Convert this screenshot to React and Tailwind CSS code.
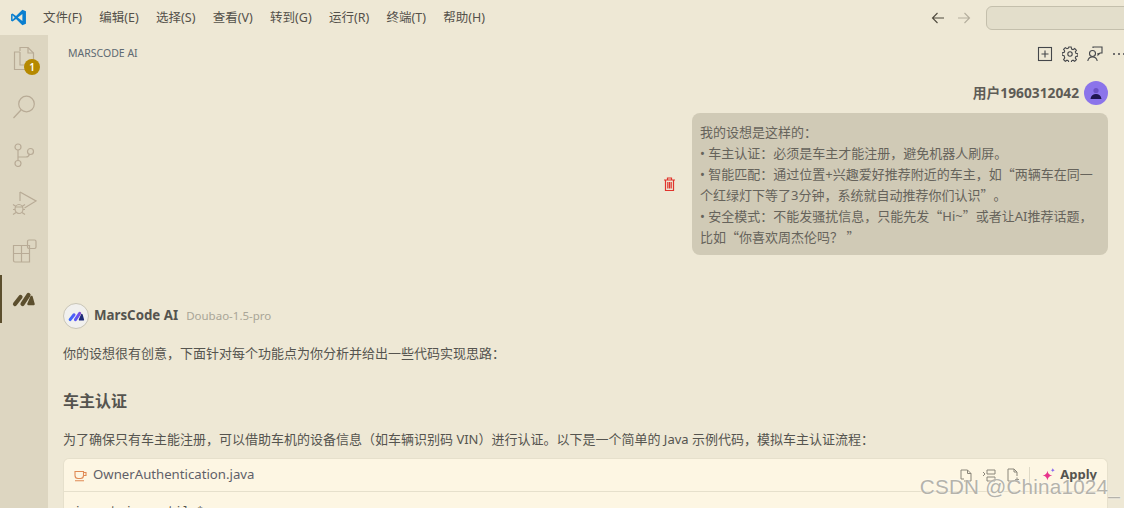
import React from 'react';

const sans = 'font-["Noto_Sans","Noto_Sans_CJK_SC",sans-serif]';

const menus = ['文件(F)', '编辑(E)', '选择(S)', '查看(V)', '转到(G)', '运行(R)', '终端(T)', '帮助(H)'];

function VsLogo() {
  return (
    <svg width="17" height="17" viewBox="0 0 24 24">
      <path d="M17.5 1 8.5 10 3.6 6.2 1.5 7.3v9.4l2.1 1.1 4.9-3.8 9 9 5-2.2V3.2z" fill="#0a7fd0" />
      <path d="M17.5 7 11 12l6.5 5z" fill="#eee8d5" />
      <path d="M3.6 8.9v6.2L6.6 12z" fill="#eee8d5" />
    </svg>
  );
}

// quotes sit in a full em box, as the CJK face draws them in the reference
function Open() {
  return <span className="inline-block w-[13px] text-right font-['Noto_Sans_CJK_SC',sans-serif] leading-none">“</span>;
}

function Close() {
  return <span className="inline-block w-[13px] text-left font-['Noto_Sans_CJK_SC',sans-serif] leading-none">”</span>;
}

function ActivityBar() {
  const stroke = { fill: 'none', stroke: '#b8ab96', strokeWidth: 1.2 };
  return (
    <aside className="flex w-12 shrink-0 flex-col items-center bg-[#ddd6c1]">
      <div className="relative flex h-12 w-12 items-center justify-center">
        <svg width="24" height="26" viewBox="0 0 24 26" {...stroke}>
          <path d="M8 5V1.500h8l5.500 5.500v13H17" />
          <path d="M16 1.500V7h5.500" />
          <path d="M8 6H2.500v17.500H15a2 2 0 0 0 2-2V19" />
          <path d="M8 6v13h9" />
        </svg>
        <span className={`absolute left-6 top-[24px] flex h-4 w-4 items-center justify-center rounded-full bg-[#b58900] text-[10px] font-semibold leading-none text-white ${sans}`}>1</span>
      </div>
      <div className="flex h-12 w-12 items-center justify-center">
        <svg width="24" height="24" viewBox="0 0 24 24" {...stroke}>
          <circle cx="14.500" cy="9" r="7.800" />
          <path d="M9 15 1.500 23" />
        </svg>
      </div>
      <div className="flex h-12 w-12 items-center justify-center">
        <svg width="24" height="24" viewBox="0 0 24 24" {...stroke}>
          <circle cx="6" cy="4" r="3" />
          <circle cx="6" cy="20.500" r="3" />
          <circle cx="18.500" cy="8.500" r="3" />
          <path d="M6 7v10.500M6 14h8c2 0 3-1 3.500-3" />
        </svg>
      </div>
      <div className="flex h-12 w-12 items-center justify-center">
        <svg width="25" height="25" viewBox="0 0 25 25" {...stroke}>
          <path d="M8 1 24 10 12.500 17" />
          <path d="M8 1v9" />
          <ellipse cx="7" cy="18" rx="4" ry="4.500" />
          <path d="M1 13.500l3 2M13 13.500l-3 2M1 18.500h2M11 18.500h2M1 23.500l3-2M13 23.500l-3-2M3 16h8" />
        </svg>
      </div>
      <div className="flex h-12 w-12 items-center justify-center">
        <svg width="25" height="25" viewBox="0 0 25 25" {...stroke}>
          <rect x="15.500" y="1" width="8.500" height="8.500" rx="1.400" />
          <path d="M1.500 6.500h16v16.500H3a1.500 1.500 0 0 1-1.500-1.500zM1.500 14.500h16M9.500 6.500v16.500" />
        </svg>
      </div>
      <div className="flex h-12 w-12 items-center justify-center border-l-2 border-[#5c4f2e] pr-0.5">
        <svg width="24" height="15" viewBox="0 0 24 15" fill="none" stroke="#5c4f2e" strokeWidth="4.200" strokeLinecap="round">
          <path d="M3 12 8.500 5M10.500 12 16.500 3" />
          <path d="M19.500 5 21.500 12 16.500 12z" fill="#5c4f2e" strokeWidth="2.500" strokeLinejoin="round" />
        </svg>
      </div>
    </aside>
  );
}

function TitleBar() {
  return (
    <header className="flex h-[35px] shrink-0 items-center bg-[#eee8d5] pl-[10px]">
      <VsLogo />
      <nav className={`ml-[16px] flex gap-[17.3px] pt-0.5 text-[12.5px] text-[#54514a] ${sans}`}>
        {menus.map((item) => (
          <span key={item}>{item}</span>
        ))}
      </nav>
      <div className="ml-auto flex items-center">
        <svg width="14" height="14" viewBox="0 0 14 14" fill="none" stroke="#4f4a3e" strokeWidth="1.100">
          <path d="M13 7H1.500M6.500 2 1.500 7l5 5" />
        </svg>
        <svg className="ml-[12px]" width="14" height="14" viewBox="0 0 14 14" fill="none" stroke="#b4ae9d" strokeWidth="1.100">
          <path d="M1 7h11.500M7.500 2l5 5-5 5" />
        </svg>
        <div className="-mr-5 ml-[15px] h-6 w-[158px] rounded-md border border-[#c4bfac] bg-[#e3decb]" />
      </div>
    </header>
  );
}

function ToolIcons() {
  return (
    <div className="flex items-center gap-[9px] text-[#44464a]">
      <svg width="16" height="16" viewBox="0 0 16 16" fill="none" stroke="currentColor" strokeWidth="1.100">
        <rect x="1.500" y="1.500" width="13" height="13" />
        <path d="M8 4.500v7M4.500 8h7" />
      </svg>
      <svg width="16" height="16" viewBox="0 0 16 16" fill="none" stroke="currentColor" strokeWidth="1.100">
        <circle cx="8" cy="8" r="2.200" />
        <path d="M6.800 1h2.400l.4 2 1.400.6 1.700-1.100 1.700 1.700-1.100 1.700.6 1.400 2 .4v2.400l-2 .4-.6 1.400 1.100 1.700-1.700 1.700-1.700-1.100-1.400.6-.4 2H6.800l-.4-2-1.400-.6-1.700 1.100-1.700-1.700 1.100-1.700L2.100 9.600l-2-.4V6.800l2-.4.6-1.400-1.100-1.700 1.700-1.700 1.700 1.100 1.400-.6z" />
      </svg>
      <svg width="16" height="16" viewBox="0 0 16 16" fill="none" stroke="currentColor" strokeWidth="1.100">
        <circle cx="5.500" cy="7.500" r="3" />
        <path d="M.8 15c.4-2.600 2.200-4 4.700-4s4.300 1.400 4.700 4" />
        <path d="M6 2V1h9v6h-2l-2 2V7" />
      </svg>
      <svg width="14" height="16" viewBox="0 0 14 16" fill="currentColor">
        <circle cx="2" cy="8" r="1" />
        <circle cx="7" cy="8" r="1" />
        <circle cx="12" cy="8" r="1" />
      </svg>
    </div>
  );
}

function UserMessage() {
  return (
    <section>
      <div className="flex items-center justify-end gap-[5px] pt-[10px]">
        <span className="text-[13.75px] font-bold text-[#5e5c56]">用户1960312042</span>
        <span className="flex h-6 w-6 items-center justify-center overflow-hidden rounded-full bg-[#8b74ea]">
          <svg width="16" height="16" viewBox="0 0 16 16">
            <circle cx="8" cy="5.500" r="2.600" fill="#6a52c4" />
            <path d="M2.500 14c.4-3.400 2.600-5 5.500-5s5.100 1.600 5.500 5z" fill="#1f1650" />
          </svg>
        </span>
      </div>
      <div className="mt-[8px] flex items-center justify-end gap-[16px]">
        <svg width="13" height="14" viewBox="0 0 13 14" fill="none" stroke="#e0342c" strokeWidth="1.200">
          <path d="M1 3h11M4.500 3V1h4v2M2.500 3v10.500h8V3M4.800 5v6.500M6.500 5v6.500M8.200 5v6.500" />
        </svg>
        <div className="w-[416px] rounded-lg bg-[#d0cab6] px-2 pb-[7px] pt-[9px] text-[13px] leading-[21px] text-[#66635b]">
          我的设想是这样的：
          <br />
          • 车主认证：必须是车主才能注册，避免机器人刷屏。
          <br />
          • 智能匹配：通过位置+兴趣爱好推荐附近的车主，如<Open />两辆车在同一个红绿灯下等了3分钟，系统就自动推荐你们认识<Close />。
          <br />
          • 安全模式：不能发骚扰信息，只能先发<Open />Hi~<Close />或者让AI推荐话题，比如<Open />你喜欢周杰伦吗？ <Close />
        </div>
      </div>
    </section>
  );
}

function AiMessage() {
  return (
    <section className="mt-[48px]">
      <div className="flex items-center">
        <span className="flex h-[26px] w-[26px] items-center justify-center rounded-full border border-[#c9c5b6] bg-[#f1f0ee]">
          <svg width="17" height="11" viewBox="0 0 24 15" fill="none" strokeWidth="4.200" strokeLinecap="round">
            <defs>
              <linearGradient id="mars" gradientUnits="userSpaceOnUse" x1="0" x2="24" y1="8" y2="8">
                <stop offset="0" stopColor="#2f6bff" />
                <stop offset="0.6" stopColor="#6a4ff0" />
                <stop offset="1" stopColor="#c0508f" />
              </linearGradient>
            </defs>
            <path d="M3 12 8.500 5M10.500 12 16.500 3" stroke="url(#mars)" />
            <path d="M19.500 5 21.500 12 16.500 12z" fill="#1e2a78" stroke="#1e2a78" strokeWidth="2.500" strokeLinejoin="round" />
          </svg>
        </span>
        <span className="ml-[5px] text-[13.3px] font-bold text-[#55544f]">MarsCode AI</span>
        <span className="ml-[8px] text-[11.5px] text-[#a9a597]">Doubao-1.5-pro</span>
      </div>
      <p className="mt-[14px] text-[13px] leading-[20px] text-[#55544f]">
        你的设想很有创意，下面针对每个功能点为你分析并给出一些代码实现思路：
      </p>
      <h2 className="mt-[26px] text-[16px] font-bold leading-[24px] text-[#55544f]">车主认证</h2>
      <p className="mt-[16px] whitespace-nowrap text-[13px] leading-[20px] text-[#55544f]">
        为了确保只有车主能注册，可以借助车机的设备信息（如车辆识别码 VIN）进行认证。以下是一个简单的 Java 示例代码，模拟车主认证流程：
      </p>
      <CodeBlock />
    </section>
  );
}

function CodeBlock() {
  return (
    <div className="mt-[9px] rounded-t-md border border-b-0 border-[#e6e0cc] bg-[#fdf6e3]">
      <div className="flex h-[33px] items-center border-b border-[#e6e0cc] pl-[10px] pr-[10px]">
        <svg width="13" height="13" viewBox="0 0 13 13" fill="none" stroke="#e08a55" strokeWidth="1.100">
          <path d="M1 2.500h8.500v4a3 3 0 0 1-3 3H4a3 3 0 0 1-3-3zM9.500 3.500H12V6.500H9.300M1 11.800h9" />
        </svg>
        <span className="ml-[6px] text-[13.2px] text-[#5f6068]">OwnerAuthentication.java</span>
        <div className="ml-auto flex items-center text-[#8a867a]">
          <svg width="14" height="14" viewBox="0 0 14 14" fill="none" stroke="currentColor">
            <path d="M2 2h6.500L12 5.500V13H5M2 2v9h3M8.500 2v3.500H12" />
          </svg>
          <svg className="ml-[9px]" width="15" height="14" viewBox="0 0 15 14" fill="none" stroke="currentColor">
            <path d="M1 4l2 2-2 2M5 2h8v4H5zM5 9h8v4H5z" />
          </svg>
          <svg className="ml-[9px]" width="14" height="14" viewBox="0 0 14 14" fill="none" stroke="currentColor">
            <path d="M8 13H2V1h6l3 3v4M8 1v3h3M11 9.500v4M9 11.500h4" />
          </svg>
          <span className="ml-[9px] h-4 w-px bg-[#dfd9c6]" />
          <svg className="ml-[11px]" width="15" height="15" viewBox="0 0 14 14">
            <path d="M6 2.500c.5 2.800 1.700 4 4.500 4.500-2.800.5-4 1.700-4.500 4.500-.5-2.800-1.700-4-4.500-4.500 2.800-.5 4-1.700 4.500-4.500z" fill="#e8348c" />
            <path d="M11 0c.2 1.200.8 1.800 2 2-1.200.2-1.800.8-2 2-.2-1.200-.8-1.800-2-2 1.200-.2 1.800-.8 2-2z" fill="#8b6cf0" />
          </svg>
          <span className="ml-[4px] text-[13px] font-bold text-[#55544f]">Apply</span>
        </div>
      </div>
      <div className="h-10 pl-[10px] pt-[11px] font-['Liberation_Mono',monospace] text-[12px] text-[#55544f]">import java.util.*;</div>
    </div>
  );
}

export default function App() {
  return (
    <div className={`relative flex h-[508px] w-[1124px] flex-col overflow-hidden bg-[#eee8d5] ${sans}`}>
      <TitleBar />
      <div className="flex min-h-0 flex-1">
        <ActivityBar />
        <main className="min-w-0 flex-1 pl-[15px] pr-4">
          <div className="flex h-[36px] items-center justify-between pl-[5px] pt-0.5">
            <span className="text-[10.5px] text-[#5f6a72]">MARSCODE AI</span>
            <div className="-mr-[18px]">
              <ToolIcons />
            </div>
          </div>
          <UserMessage />
          <AiMessage />
        </main>
      </div>
      <span className="pointer-events-none absolute bottom-[10px] right-1 font-['Liberation_Sans',sans-serif] text-[20.7px] leading-none tracking-[0.2px] text-[#b5b3ab] [text-shadow:0_0_2px_#fff]">CSDN @China1024_</span>
    </div>
  );
}
